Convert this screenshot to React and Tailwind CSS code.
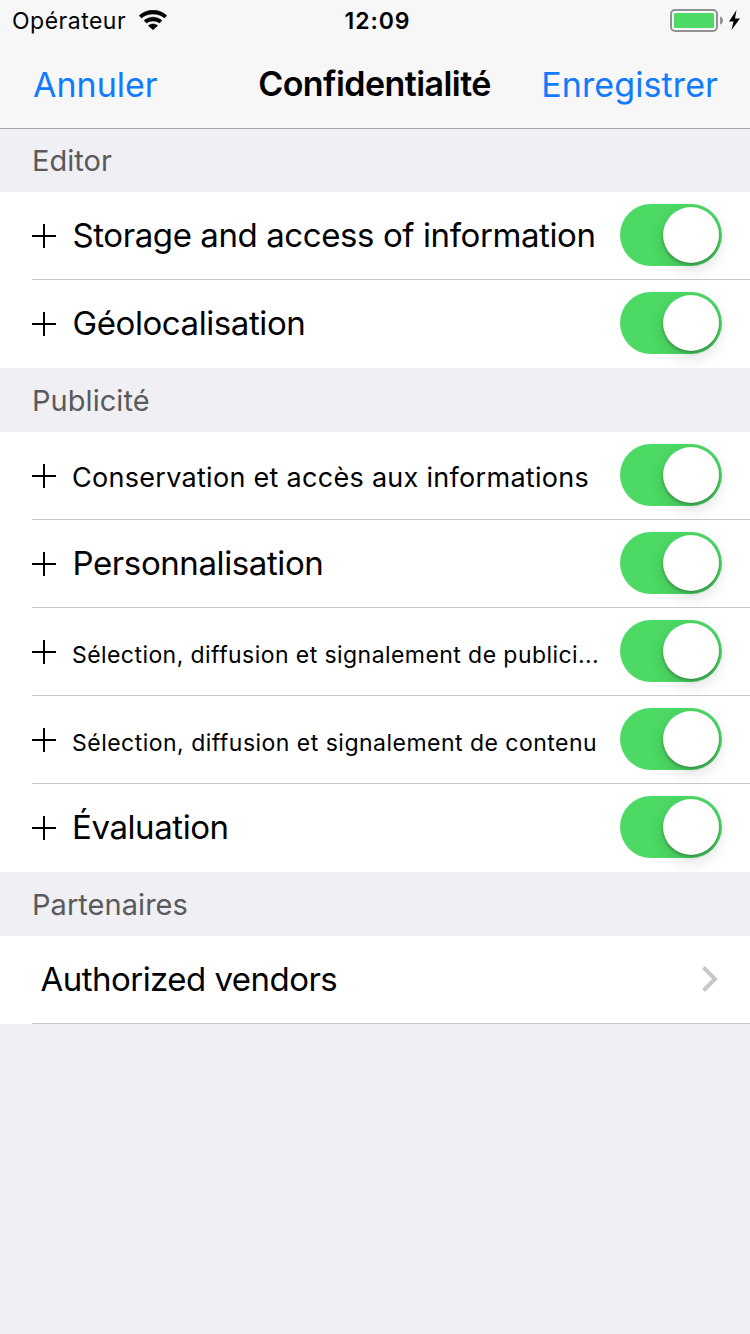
const sections = [
  {
    title: "Editor",
    titleStyle: "h-[63px] pb-px",
    rows: [
      { label: "Storage and access of information", style: "text-[33px] tracking-[-0.41px] pl-[0.5px] pb-[2px]" },
      { label: "Géolocalisation", style: "text-[33px] tracking-[-0.42px] pl-[0.5px] pb-[2px]" },
    ],
  },
  {
    title: "Publicité",
    titleStyle: "h-16",
    rows: [
      { label: "Conservation et accès aux informations", style: "text-[27px] tracking-[0.29px] pt-[2px]" },
      { label: "Personnalisation", style: "text-[33px] tracking-[-0.4px] pl-[0.5px] pb-[2px]" },
      { label: "Sélection, diffusion et signalement de publici...", style: "text-[23px] tracking-[0.43px] pt-[7px]" },
      { label: "Sélection, diffusion et signalement de contenu", style: "text-[23px] tracking-[0.48px] pt-[7px]" },
      { label: "Évaluation", style: "text-[33px] tracking-[-0.42px] pb-[2px]" },
    ],
  },
];

function SectionTitle({ children, className }) {
  return (
    <h2 className={`flex items-center bg-[#efeff4] pl-8 text-[29px] leading-none tracking-[0.05px] text-[#5a5a5c] ${className}`}>
      {children}
    </h2>
  );
}

function Toggle() {
  return (
    <button className="flex h-[62px] w-[102px] shrink-0 items-center justify-end rounded-full bg-[#4cd964] pr-[3px]">
      <span className="size-14 rounded-full bg-white shadow-[0_6px_16px_rgba(0,0,0,0.14),0_2px_3px_rgba(0,0,0,0.28)]" />
    </button>
  );
}

function ToggleRow({ row, last }) {
  return (
    <div className="flex h-[88px] bg-white pl-8">
      <div className={`flex grow border-[#c8c7cc] ${last ? "" : "border-b"}`}>
        <svg className="mt-8 size-6 shrink-0" viewBox="0 0 24 24" fill="none" stroke="#000" strokeWidth="2">
          <path d="M12 0V24M0 12H24" />
        </svg>
        <span className={`ml-4 flex h-[88px] grow items-center whitespace-nowrap leading-none ${row.style}`}>
          {row.label}
        </span>
        <div className="mr-7 mt-3">
          <Toggle />
        </div>
      </div>
    </div>
  );
}

function StatusBar() {
  return (
    <div className="grid h-10 grid-cols-3 items-center pl-3 pr-2 text-[23px] leading-none">
      <div className="flex items-center">
        <span className="pt-[2px] tracking-[0.5px]">Opérateur</span>
        <svg className="ml-[13px] h-5 w-7" viewBox="0 0 28 20" stroke="#000" strokeWidth="0.6" strokeLinejoin="round">
          <path d="M14 0.300C8.600 0.300 3.900 2.300 0.300 5.600L2.500 8C5.500 5.400 9.500 4 14 4S22.500 5.400 25.500 8L27.700 5.600C24.100 2.300 19.400 0.300 14 0.300Z" />
          <path d="M14 7.200C10.600 7.200 7.500 8.500 5.100 10.500L7.600 13.100C9.300 11.700 11.500 10.900 14 10.900S18.700 11.700 20.400 13.100L22.900 10.500C20.500 8.500 17.400 7.200 14 7.200Z" />
          <path d="M14 14C12.300 14 10.600 14.700 9.400 15.700L14 19.700L18.600 15.700C17.400 14.700 15.700 14 14 14Z" />
        </svg>
      </div>
      <span className="pl-px pt-[2px] text-center font-semibold tracking-[0.9px]">12:09</span>
      <div className="flex items-center justify-end">
        <svg className="h-[23px] w-[72px]" viewBox="0 0 72 23">
          <rect x="1" y="1" width="46" height="21" rx="4" fill="none" stroke="#929292" strokeWidth="2" />
          <rect x="4" y="4" width="40" height="15" rx="1.500" fill="#4cd964" />
          <path d="M50 7.500C52 8 53 9.500 53 11.500S52 15 50 15.500Z" fill="#929292" />
          <path d="M66.500 1L59 12.500H63.500L61.500 21L70 9.500H65Z" />
        </svg>
      </div>
    </div>
  );
}

export default function App() {
  return (
    <div className="flex min-h-[1334px] w-[750px] flex-col bg-[#efeff4] font-['Inter',sans-serif] text-black">
      <header className="h-[129px] border-b border-[#a7a7ab] bg-[#f7f7f7]">
        <StatusBar />
        <nav className="grid h-[88px] grid-cols-[1fr_auto_1fr] items-center pl-[33px] pr-8 text-[34px] leading-none">
          <button className="justify-self-start pt-[2px] text-[#117bff]">Annuler</button>
          <h1 className="pr-[2px] text-[34px] font-semibold tracking-[-0.56px]">Confidentialité</h1>
          <button className="justify-self-end pt-[2px] tracking-[0.1px] text-[#117bff]">Enregistrer</button>
        </nav>
      </header>
      <main>
        {sections.map((section) => (
          <section key={section.title}>
            <SectionTitle className={section.titleStyle}>{section.title}</SectionTitle>
            {section.rows.map((row, i) => (
              <ToggleRow key={row.label} row={row} last={i === section.rows.length - 1} />
            ))}
          </section>
        ))}
        <section>
          <SectionTitle className="h-16">Partenaires</SectionTitle>
          <div className="flex h-[88px] bg-white pl-8">
            <div className="flex grow items-center justify-between border-b border-[#c8c7cc] pl-[8.5px] pr-8">
              <span className="pb-px text-[33px] leading-none tracking-[-0.53px]">Authorized vendors</span>
              <svg className="mb-px h-[26px] w-4" viewBox="0 0 16 26" fill="none" stroke="#c7c7cc" strokeWidth="4">
                <path d="M1.500 1.500L13 13L1.500 24.500" />
              </svg>
            </div>
          </div>
        </section>
      </main>
    </div>
  );
}
